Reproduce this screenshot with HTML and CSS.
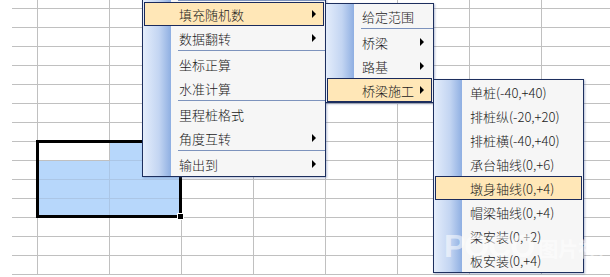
FILE: index.html
```html
<!DOCTYPE html>
<html lang="zh-CN">
<head>
  <meta charset="UTF-8">
  <title>工具菜单</title>
  <link rel="stylesheet" href="styles.css">
</head>
<body>
  <div class="sheet" id="sheet"></div>

  <div class="selection">
    <span class="handle"></span>
  </div>

  <div class="menu menu-main">
    <div class="sep"></div>
    <div class="item sub active">填充随机数</div>
    <div class="item sub">数据翻转</div>
    <div class="sep"></div>
    <div class="item">坐标正算</div>
    <div class="item">水准计算</div>
    <div class="sep"></div>
    <div class="item">里程桩格式</div>
    <div class="item sub">角度互转</div>
    <div class="sep"></div>
    <div class="item sub">输出到</div>
  </div>

  <div class="menu menu-random">
    <div class="item">给定范围</div>
    <div class="sep"></div>
    <div class="item sub">桥梁</div>
    <div class="item sub">路基</div>
    <div class="item sub active">桥梁施工</div>
  </div>

  <div class="menu menu-bridge">
    <div class="item">单桩(-40,+40)</div>
    <div class="item">排桩纵(-20,+20)</div>
    <div class="item">排桩横(-40,+40)</div>
    <div class="item">承台轴线(0,+6)</div>
    <div class="item active">墩身轴线(0,+4)</div>
    <div class="item">帽梁轴线(0,+4)</div>
    <div class="item">梁安装(0,+2)</div>
    <div class="item">板安装(0,+4)</div>
  </div>

  <div class="watermark">
    <span class="wm-logo">POCO</span>
    <span class="wm-name">图片社区</span>
  </div>

  <script>
    // 表格：15 行 x 9 列，B8:C11 为选中区域（B8 为活动单元格）
    const sheet = document.getElementById("sheet");
    for (let r = 0; r < 15; r++) {
      for (let c = 0; c < 9; c++) {
        const cell = document.createElement("div");
        cell.className = "cell";
        const selected = r >= 8 && r <= 11 && c >= 1 && c <= 2;
        if (selected && !(r === 8 && c === 1)) {
          cell.classList.add("sel");
        }
        sheet.appendChild(cell);
      }
    }
  </script>
</body>
</html>
```

FILE: styles.css
```css
body {
  margin: 0;
  width: 610px;
  height: 277px;
  overflow: hidden;
  position: relative;
  background: #fff;
  font-family: "Microsoft YaHei", "Noto Sans CJK SC", sans-serif;
  font-size: 13px;
  color: #1a1a1a;
}

/* 表格 */
.sheet {
  display: grid;
  grid-template-columns: 26px repeat(8, 72px);
  grid-template-rows: 9px repeat(14, 19px);
  padding-left: 12px;
}

.cell {
  border-right: 1px solid #c0c0c0;
  border-bottom: 1px solid #c0c0c0;
}

.cell.sel {
  background: #b7d7fb;
  border-color: #abc6e6;
}

.selection {
  position: absolute;
  left: 36px;
  top: 140px;
  width: 146px;
  height: 78px;
  box-sizing: border-box;
  border: 3px solid #000;
}

.handle {
  position: absolute;
  right: -5px;
  bottom: -5px;
  width: 5px;
  height: 5px;
  background: #000;
  border: 1px solid #fff;
}

/* 菜单 */
.menu {
  position: absolute;
  box-sizing: border-box;
  border: 1px solid #1d2f5e;
  background: linear-gradient(to right, #e4edfb 0, #c3d5f2 16px, #8fafe2 28px, #f6f6f6 28px);
  box-shadow: 1px 1px 2px rgba(70, 95, 150, 0.4);
}

.menu-main {
  left: 142px;
  top: -1px;
  width: 184px;
}

.menu-random {
  left: 325px;
  top: 3px;
  width: 109px;
}

.menu-bridge {
  left: 433px;
  top: 79px;
  width: 151px;
}

.item {
  display: flex;
  align-items: center;
  box-sizing: border-box;
  height: 24px;
  margin: 0 1px;
  padding-left: 34px;
  border: 1px solid transparent;
  font-weight: 300;
  white-space: nowrap;
}

.item.active {
  background: #ffe7b7;
  border-color: #1b2b5c;
}

.item.sub::after {
  content: "";
  margin-left: auto;
  margin-right: 7px;
  border-left: 4px solid #000;
  border-top: 4px solid transparent;
  border-bottom: 4px solid transparent;
}

.sep {
  height: 2px;
  margin-left: 35px;
  border-top: 1px solid #7d93bd;
  box-sizing: border-box;
}

/* 水印 */
.watermark {
  position: absolute;
  left: 444px;
  top: 228px;
  display: flex;
  align-items: baseline;
  gap: 4px;
  color: rgba(255, 255, 255, 0.55);
  font-family: "Liberation Sans", "Noto Sans CJK SC", sans-serif;
  font-weight: bold;
  white-space: nowrap;
}

.wm-logo {
  font-size: 32px;
  letter-spacing: -1px;
}

.wm-name {
  font-size: 20px;
}
```
